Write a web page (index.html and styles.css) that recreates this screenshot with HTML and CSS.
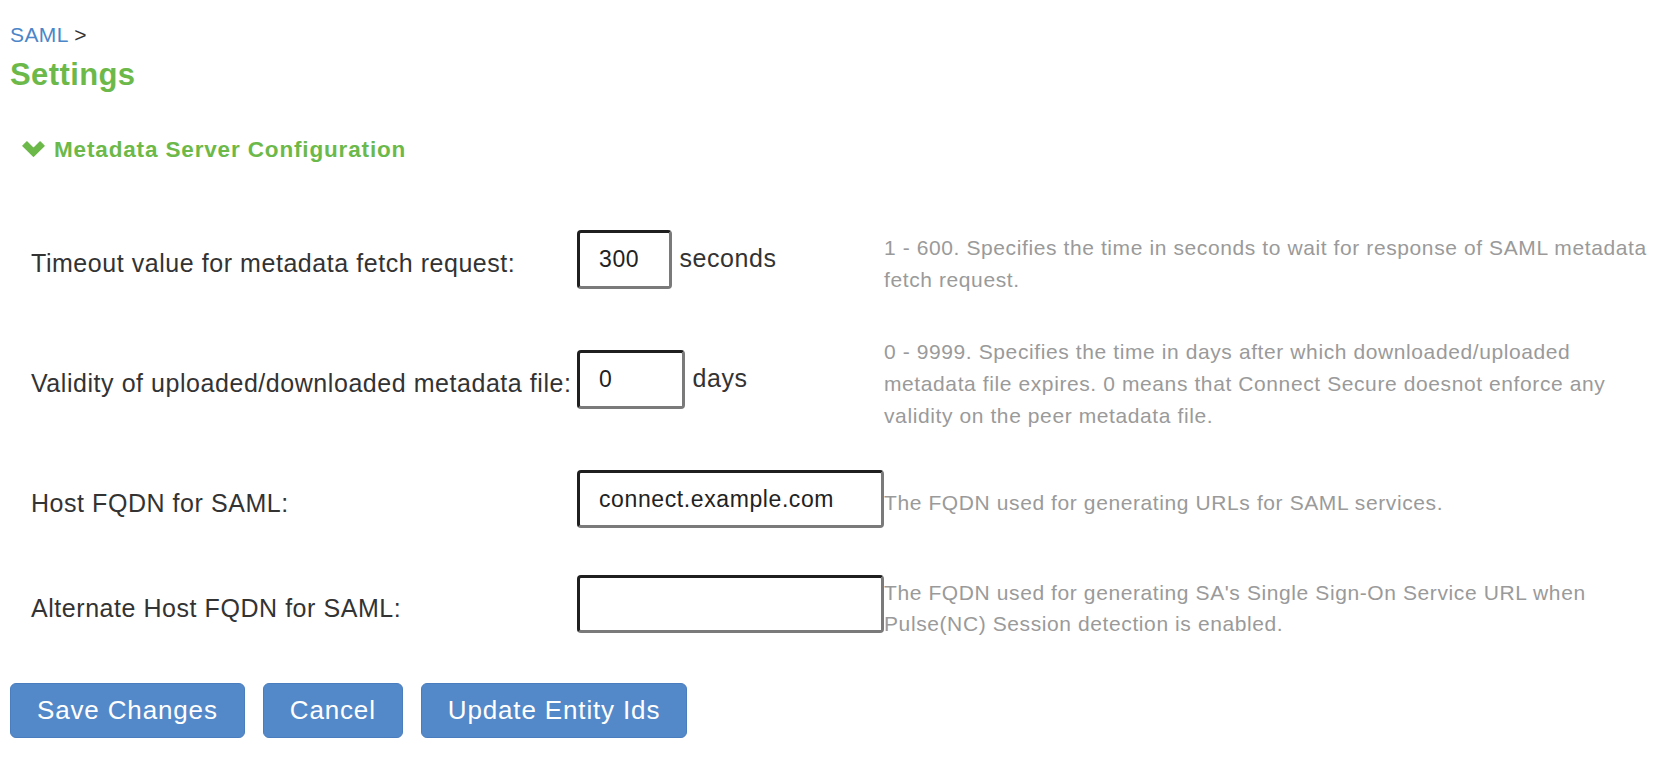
FILE: index.html
```html
<!DOCTYPE html>
<html lang="en">
<head>
<meta charset="utf-8">
<title>SAML Settings</title>
<link rel="stylesheet" href="styles.css">
</head>
<body>
<div class="page">
  <div class="breadcrumb"><a class="crumb-link" href="#">SAML</a> &gt;</div>
  <h1 class="title">Settings</h1>

  <div class="section-head">
    <svg class="chevron" width="23" height="16" viewBox="0 0 23 16" aria-hidden="true">
      <polygon points="0.8,4.8 4.8,0.8 11.5,7.4 18.2,0.8 22.2,4.8 11.5,15.4" />
    </svg>
    <span class="section-title">Metadata Server Configuration</span>
  </div>

  <div class="form-grid">
    <div class="label">Timeout value for metadata fetch request:</div>
    <div class="field"><input class="text-input w-sm" type="text" value="300"> <span class="unit">seconds</span></div>
    <div class="help">1 - 600. Specifies the time in seconds to wait for response of SAML metadata fetch request.</div>

    <div class="label">Validity of uploaded/downloaded metadata file:</div>
    <div class="field"><input class="text-input w-md" type="text" value="0"> <span class="unit">days</span></div>
    <div class="help">0 - 9999. Specifies the time in days after which downloaded/uploaded metadata file expires. 0 means that Connect Secure doesnot enforce any validity on the peer metadata file.</div>

    <div class="label">Host FQDN for SAML:</div>
    <div class="field"><input class="text-input w-lg" type="text" value="connect.example.com"></div>
    <div class="help">The FQDN used for generating URLs for SAML services.</div>

    <div class="label">Alternate Host FQDN for SAML:</div>
    <div class="field"><input class="text-input w-lg" type="text" value=""></div>
    <div class="help">The FQDN used for generating SA's Single Sign-On Service URL when Pulse(NC) Session detection is enabled.</div>
  </div>

  <div class="actions">
    <button class="btn btn-save" type="button">Save Changes</button>
    <button class="btn btn-cancel" type="button">Cancel</button>
    <button class="btn btn-update" type="button">Update Entity Ids</button>
  </div>
</div>
</body>
</html>
```

FILE: styles.css
```css
* {
  box-sizing: border-box;
}

html, body {
  margin: 0;
  padding: 0;
  background: #ffffff;
}

body {
  font-family: "Liberation Sans", Arial, Helvetica, sans-serif;
  color: #333333;
}

.page {
  padding: 20px 4px 0 10px;
}

.breadcrumb {
  font-size: 21px;
  letter-spacing: 0.4px;
  line-height: 30px;
  height: 30px;
  color: #333333;
}

.crumb-link {
  color: #4a86c8;
  text-decoration: none;
}

.title {
  margin: 5px 0 0 0;
  font-size: 31px;
  font-weight: bold;
  letter-spacing: 0.4px;
  line-height: 40px;
  color: #6cb94a;
}

.section-head {
  display: flex;
  align-items: center;
  gap: 9px;
  margin: 40px 0 0 12px;
  height: 30px;
  line-height: 30px;
}

.chevron {
  display: block;
  flex: none;
  margin-top: -2px;
}

.chevron polygon {
  fill: #6cb94a;
  stroke: #6cb94a;
  stroke-width: 1.2;
  stroke-linejoin: round;
}

.section-title {
  font-size: 22.5px;
  font-weight: bold;
  letter-spacing: 0.85px;
  color: #6cb94a;
}

.form-grid {
  display: grid;
  grid-template-columns: 546px 307px 1fr;
  row-gap: 39px;
  margin: 65px 0 0 21px;
}

.label {
  align-self: center;
  font-size: 25px;
  letter-spacing: 0.55px;
  white-space: nowrap;
  color: #333333;
}

.field {
  align-self: center;
  margin-bottom: 8px;
  white-space: nowrap;
  font-size: 25px;
  letter-spacing: 0.55px;
  color: #333333;
}

.text-input {
  display: inline-block;
  vertical-align: baseline;
  margin: 0;
  height: 59px;
  padding: 0 19px;
  font-family: "Liberation Sans", Arial, Helvetica, sans-serif;
  font-size: 23px;
  letter-spacing: 0.6px;
  color: #222222;
  background: #ffffff;
  border: 3px solid;
  border-color: #1f1f1f #7a7a7a #7a7a7a #1f1f1f;
  border-radius: 4px;
  outline: none;
}

.w-sm {
  width: 95px;
}

.w-md {
  width: 108px;
}

.w-lg {
  width: 307px;
  height: 58px;
}

.unit {
  color: #333333;
}

.help {
  align-self: center;
  font-size: 21px;
  letter-spacing: 0.6px;
  line-height: 31.8px;
  color: #9a9a9a;
}

.actions {
  display: flex;
  gap: 18px;
  margin-top: 42px;
}

.btn {
  height: 55px;
  padding: 0 26px;
  font-family: "Liberation Sans", Arial, Helvetica, sans-serif;
  font-size: 26px;
  letter-spacing: 0.85px;
  color: #ffffff;
  background: #5489c9;
  border: 1px solid #4a7dbd;
  border-radius: 6px;
  cursor: pointer;
}
```
